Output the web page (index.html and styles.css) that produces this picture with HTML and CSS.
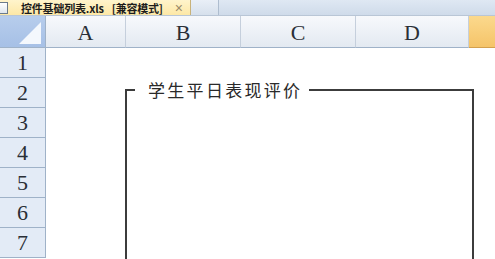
FILE: index.html
```html
<!DOCTYPE html>
<html lang="zh">
<head>
<meta charset="utf-8">
<link rel="stylesheet" href="styles.css">
</head>
<body>
<div class="app">
  <div class="tabbar">
    <div class="tab">
      <span class="xl-icon"></span>
      <span class="tab-title">控件基础列表.xls<span class="tab-mode">[兼容模式]</span></span>
      <span class="tab-close">×</span>
    </div>
    <div class="tab-gap"></div>
    <div class="tab-rest"></div>
  </div>
  <div class="sheet">
    <div class="corner"><span class="tri"></span></div>
    <div class="colh">A</div>
    <div class="colh">B</div>
    <div class="colh">C</div>
    <div class="colh">D</div>
    <div class="colh sel"></div>

    <div class="rowh">1</div><div class="cells"></div>
    <div class="rowh">2</div><div class="cells"></div>
    <div class="rowh">3</div><div class="cells"></div>
    <div class="rowh">4</div><div class="cells"></div>
    <div class="rowh">5</div><div class="cells"></div>
    <div class="rowh">6</div><div class="cells"></div>
    <div class="rowh">7</div><div class="cells"></div>

    <fieldset class="groupbox">
      <legend>学生平日表现评价</legend>
    </fieldset>
  </div>
</div>
</body>
</html>
```
FILE: styles.css
```css
html, body {
  margin: 0;
  padding: 0;
  background: #ffffff;
  overflow: hidden;
}
.app {
  width: 495px;
  height: 259px;
  overflow: hidden;
  font-family: "Liberation Serif", "Noto Sans CJK SC", serif;
}
.tabbar {
  height: 15px;
  display: flex;
  background: linear-gradient(#dfe8f3, #cfdbea);
  border-bottom: 1px solid #b9c6d6;
}
.tab {
  width: 191px;
  display: flex;
  align-items: center;
  background: linear-gradient(#fff4cc, #fde8a6);
  border-right: 1px solid #c8b27a;
  box-sizing: border-box;
  overflow: hidden;
}
.xl-icon {
  width: 10px;
  height: 12px;
  margin-left: -2px;
  border: 1px solid #6b7b8c;
  background: linear-gradient(#ffffff, #dfe6ee);
  box-sizing: border-box;
  flex: none;
}
.tab-title {
  margin-left: 13px;
  font-family: "Noto Sans CJK SC", "Liberation Sans", sans-serif;
  font-weight: bold;
  font-size: 11px;
  line-height: 14px;
  color: #1c1c1c;
  white-space: nowrap;
  letter-spacing: -0.2px;
}
.tab-mode {
  margin-left: 8px;
}
.tab-close {
  margin-left: 12px;
  font-family: "Liberation Sans", sans-serif;
  font-size: 14px;
  line-height: 14px;
  color: #9a8a6a;
}
.tab-gap {
  width: 27px;
  background: linear-gradient(#e9eff7, #d6e0ec);
  border-right: 1px solid #aebdcf;
}
.tab-rest {
  flex: 1;
}
.sheet {
  position: relative;
  display: grid;
  grid-template-columns: 46px 80px 115px 115px 113px 1fr;
  grid-template-rows: 32px repeat(7, 30px);
}
.corner {
  position: relative;
  background: linear-gradient(#b7cdec, #a6c0e6);
  border-right: 1px solid #9fb2c8;
  border-bottom: 1px solid #9fb2c8;
  box-sizing: border-box;
}
.tri {
  position: absolute;
  right: 4px;
  bottom: 3px;
  width: 0;
  height: 0;
  border-left: 22px solid transparent;
  border-bottom: 22px solid #f4f8fd;
}
.colh {
  display: flex;
  align-items: center;
  justify-content: center;
  background: linear-gradient(#f7f9fc, #e3e9f1);
  border-right: 1px solid #c5cfdc;
  border-bottom: 1px solid #9fb2c8;
  box-sizing: border-box;
  font-size: 22px;
  color: #2a2f36;
  padding-top: 2px;
}
.colh.sel {
  background: linear-gradient(#fbd98d, #f5c469);
  border-right: none;
  border-bottom: 1px solid #d3a04e;
}
.rowh {
  grid-column: 1;
  display: flex;
  align-items: center;
  justify-content: center;
  background: #e3ebf6;
  border-right: 1px solid #9fb2c8;
  border-bottom: 1px solid #9fb2c8;
  box-sizing: border-box;
  font-size: 22px;
  color: #2a2f36;
}
.cells {
  grid-column: 2 / -1;
  background: #ffffff;
}
.groupbox {
  position: absolute;
  left: 125px;
  top: 65px;
  width: 349px;
  height: 260px;
  margin: 0;
  padding: 0;
  border: 2px solid #3c3c3c;
  border-bottom: none;
  box-sizing: border-box;
  background: transparent;
}
.groupbox legend {
  margin-left: 8px;
  padding: 0 7px 0 13px;
  font-family: "Noto Sans CJK SC", sans-serif;
  font-size: 17px;
  letter-spacing: 2.3px;
  line-height: 18px;
  color: #2a2a2a;
}
```
